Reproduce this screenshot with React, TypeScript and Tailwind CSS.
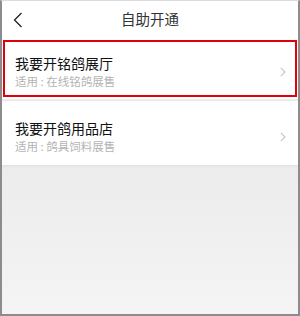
import React from 'react';

const font = { fontFamily: '"Noto Sans CJK SC", "Noto Sans", sans-serif' };

const items = [
  { title: '我要开铭鸽展厅', sub: '适用 : 在线铭鸽展售', active: true },
  { title: '我要开鸽用品店', sub: '适用 : 鸽具饲料展售', active: false },
];

const Chevron = ({ className }: { className?: string }) => (
  <svg viewBox="0 0 6 10" className={className} fill="none">
    <path d="M0.8 0.8 L5 5 L0.8 9.2" stroke="currentColor" strokeWidth="1.1" />
  </svg>
);

const App = () => {
  return (
    <div
      className="w-[300px] h-[316px] flex flex-col border-x-2 border-b-2 border-t border-x-[#8c8c8c] border-b-[#8c8c8c] border-t-[#dcdcdc] overflow-hidden"
      style={font}
    >
      {/* header */}
      <div className="h-[37px] bg-white grid grid-cols-[40px_1fr_40px] items-center">
        <div className="pl-[11px] flex items-center">
          <svg viewBox="0 0 10 16" className="w-[10px] h-[16px] text-[#222]" fill="none">
            <path d="M8.5 1 L1.5 8 L8.5 15" stroke="currentColor" strokeWidth="1.3" />
          </svg>
        </div>
        <div className="text-center text-[14.5px] text-[#333] leading-none">自助开通</div>
        <div />
      </div>

      {/* list */}
      <div className="flex flex-col gap-[2px] bg-[#ebebeb]">
        {items.map((item, i) => (
          <div
            key={i}
            className={`relative bg-white flex items-start justify-between pl-[13px] pr-[12px] ${
              i === 0 ? 'h-[61px] pt-[16px]' : 'h-[64px] pt-[18px]'
            }`}
          >
            <div className="flex flex-col">
              <span className="text-[14px] leading-[18px] text-[#111]">{item.title}</span>
              <span className="text-[11.5px] leading-[16px] mt-[1px] text-[#b4b4b4]">{item.sub}</span>
            </div>
            <Chevron className="w-[6px] h-[10px] text-[#c4c4c4] mt-[13px]" />
            {item.active && (
              <div className="absolute left-[1px] right-[1px] top-[2px] bottom-[2px] border-2 border-[#e0000b]" />
            )}
          </div>
        ))}
      </div>

      {/* empty area */}
      <div className="flex-1 bg-gradient-to-b from-[#ececec] to-[#f4f4f4] shadow-[inset_0_3px_3px_-2px_rgba(0,0,0,0.06)]" />
    </div>
  );
};

export default App;
